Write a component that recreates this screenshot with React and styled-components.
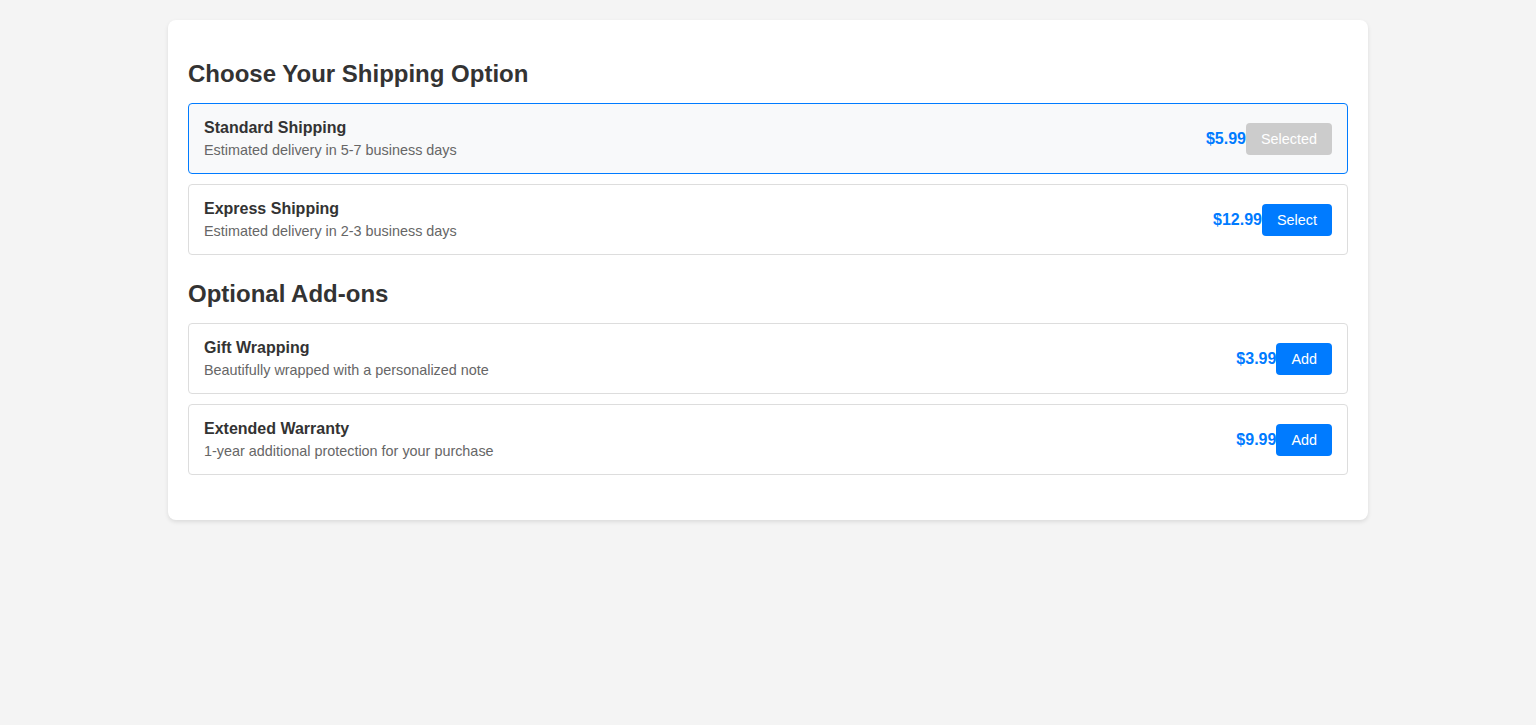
import React, { useState } from "react"
import styled, { createGlobalStyle } from "styled-components"

const GlobalStyle = createGlobalStyle`
    body {
        margin: 0;
        background-color: #f4f4f4;
        font-family: "Liberation Sans", Arial, sans-serif;
        color: #333;
    }
`

const shippingOptions = [
    { id: 'standard', name: 'Standard Shipping', description: 'Estimated delivery in 5-7 business days', price: '$5.99' },
    { id: 'express', name: 'Express Shipping', description: 'Estimated delivery in 2-3 business days', price: '$12.99' },
]

const addOns = [
    { id: 'gift', name: 'Gift Wrapping', description: 'Beautifully wrapped with a personalized note', price: '$3.99' },
    { id: 'warranty', name: 'Extended Warranty', description: '1-year additional protection for your purchase', price: '$9.99' },
]

const OptionRow = ({ option, selected, buttonLabel, onClick }) => (
    <Option $selected={selected}>
        <OptionInfo>
            <OptionName>{option.name}</OptionName>
            <OptionDescription>{option.description}</OptionDescription>
        </OptionInfo>
        <OptionAction>
            <Price>{option.price}</Price>
            <ActionButton $disabled={selected} onClick={onClick}>{buttonLabel}</ActionButton>
        </OptionAction>
    </Option>
)

const App = () => {
    const [shipping, setShipping] = useState('standard')
    const [added, setAdded] = useState([])

    const toggleAddOn = (id) => {
        setAdded(prev => prev.includes(id) ? prev.filter(item => item !== id) : [...prev, id])
    }

    return (
        <>
            <GlobalStyle />
            <Card>
                <Section>
                    <Heading>Choose Your Shipping Option</Heading>
                    <OptionList>
                        {shippingOptions.map(option => (
                            <OptionRow
                                key={option.id}
                                option={option}
                                selected={shipping === option.id}
                                buttonLabel={shipping === option.id ? 'Selected' : 'Select'}
                                onClick={() => setShipping(option.id)}
                            />
                        ))}
                    </OptionList>
                </Section>
                <Section>
                    <Heading>Optional Add-ons</Heading>
                    <OptionList>
                        {addOns.map(option => (
                            <OptionRow
                                key={option.id}
                                option={option}
                                selected={added.includes(option.id)}
                                buttonLabel={added.includes(option.id) ? 'Added' : 'Add'}
                                onClick={() => toggleAddOn(option.id)}
                            />
                        ))}
                    </OptionList>
                </Section>
            </Card>
        </>
    )
}

const Card = styled.div`
    max-width: 1200px;
    margin: 20px auto;
    padding: 40px 20px 20px;
    box-sizing: border-box;
    background-color: #fff;
    border-radius: 8px;
    box-shadow: 0 2px 4px rgba(0, 0, 0, 0.1);
`

const Section = styled.section`
    margin-bottom: 25px;
`

const Heading = styled.h2`
    margin: 0 0 15px;
    font-size: 24px;
    font-weight: bold;
    color: #333;
`

const OptionList = styled.div`
    display: flex;
    flex-direction: column;
    gap: 10px;
`

const Option = styled.div`
    display: flex;
    justify-content: space-between;
    align-items: center;
    padding: 15px;
    border: 1px solid ${props => props.$selected ? '#007bff' : '#ddd'};
    border-radius: 4px;
    background-color: ${props => props.$selected ? '#f8f9fa' : '#fff'};
`

const OptionInfo = styled.div`
    display: flex;
    flex-direction: column;
`

const OptionName = styled.div`
    margin-bottom: 5px;
    font-size: 16px;
    font-weight: bold;
    color: #333;
`

const OptionDescription = styled.div`
    font-size: 0.9em;
    color: #666;
`

const OptionAction = styled.div`
    display: flex;
    align-items: center;
`

const Price = styled.div`
    font-size: 16px;
    font-weight: bold;
    color: #007bff;
`

const ActionButton = styled.button`
    padding: 8px 15px;
    border: 0;
    border-radius: 4px;
    background-color: ${props => props.$disabled ? '#ccc' : '#007bff'};
    color: #fff;
    font-family: "Liberation Sans", Arial, sans-serif;
    font-size: 0.9em;
    line-height: normal;
    cursor: ${props => props.$disabled ? 'default' : 'pointer'};
`

export default App
